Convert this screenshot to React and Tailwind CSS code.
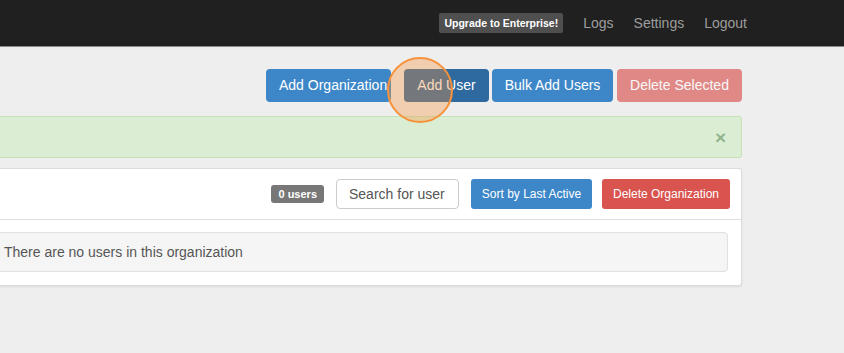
export default function App() {
  return (
    <div className="relative w-[844px] h-[353px] overflow-hidden bg-[#eeeeee] font-['Liberation_Sans',Arial,sans-serif]">
      {/* Navbar */}
      <div className="h-[47px] bg-[#202020] border-b border-[#8a8a8a] flex items-center justify-end pr-[97px]">
        <div className="flex items-center gap-[20px]">
          <span className="h-[20px] px-[5px] rounded-[2px] bg-[#4f4f4f] text-white text-[10.5px] font-bold flex items-center leading-none">
            Upgrade to Enterprise!
          </span>
          <span className="text-[14px] text-[#9d9d9d]">Logs</span>
          <span className="text-[14px] text-[#9d9d9d]">Settings</span>
          <span className="text-[14px] text-[#9d9d9d]">Logout</span>
        </div>
      </div>

      {/* Content */}
      <div className="ml-[-31px] mr-[102px]">
        {/* Top buttons */}
        <div className="flex justify-end pt-[22px]">
          <button className="w-[125px] h-[33px] rounded-[4px] bg-[#3d87c9] text-white text-[14px] flex items-center justify-start pl-[13px] whitespace-nowrap overflow-hidden">
            Add Organization
          </button>
          <button className="ml-[13px] w-[85px] h-[33px] rounded-[4px] bg-[#2e6aa0] text-white text-[14px] flex items-center justify-center">
            Add User
          </button>
          <button className="ml-[3px] w-[121px] h-[33px] rounded-[4px] bg-[#3d87c9] text-white text-[14px] flex items-center justify-center">
            Bulk Add Users
          </button>
          <button className="ml-[4px] w-[125px] h-[33px] rounded-[4px] bg-[#d9534f] opacity-[0.65] text-white text-[14px] flex items-center justify-center">
            Delete Selected
          </button>
        </div>

        {/* Alert */}
        <div className="mt-[14px] h-[42px] rounded-[3px] bg-[#dbeed3] border border-[#c5e2b7] flex items-center justify-end pr-[15px]">
          <span className="text-[19px] font-bold leading-none text-[#93b38d]">×</span>
        </div>

        {/* Panel */}
        <div className="mt-[10px] bg-white border border-[#dcdcdc] rounded-[3px] shadow-[0_1px_2px_rgba(0,0,0,0.08)]">
          <div className="h-[51px] border-b border-[#dddddd] flex items-center justify-end pr-[11px]">
            <span className="h-[18px] px-[7px] rounded-[3px] bg-[#777777] text-white text-[11px] font-bold flex items-center leading-none">
              0 users
            </span>
            <input
              className="ml-[12px] w-[123px] h-[30px] px-3 border border-[#cccccc] rounded-[4px] bg-white text-[14px] placeholder:text-[#555555] outline-none"
              placeholder="Search for user"
            />
            <button className="ml-[12px] w-[121px] h-[30px] rounded-[3px] bg-[#3d87c9] text-white text-[12px] flex items-center justify-center">
              Sort by Last Active
            </button>
            <button className="ml-[10px] w-[128px] h-[30px] rounded-[3px] bg-[#d9534f] text-white text-[12px] flex items-center justify-center">
              Delete Organization
            </button>
          </div>
          <div className="pt-[12px] pb-[13px] pl-[15px] pr-[13px]">
            <div className="h-[40px] bg-[#f5f5f5] border border-[#e1e1e1] rounded-[4px] flex items-center pl-[18px] text-[14px] text-[#555555]">
              There are no users in this organization
            </div>
          </div>
        </div>
      </div>

      {/* Click highlight overlay */}
      <div className="absolute left-[387px] top-[57px] w-[66px] h-[66px] rounded-full border-2 border-[#f7923a] bg-[#f7923a]/35 pointer-events-none" />
    </div>
  );
}
